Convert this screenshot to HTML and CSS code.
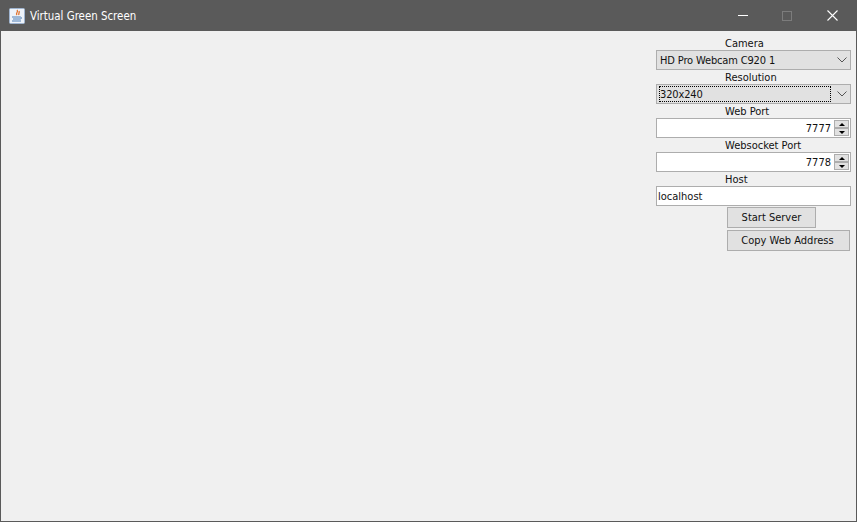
FILE: index.html
```html
<!DOCTYPE html>
<html lang="en">
<head>
<meta charset="utf-8">
<title>Virtual Green Screen</title>
<link rel="stylesheet" href="styles.css">
</head>
<body>
<div class="window">
  <header class="titlebar">
    <svg class="app-icon" width="16" height="16" viewBox="0 0 16 16">
      <rect x="0.5" y="0.5" width="15" height="15" rx="1" fill="#eef3fa" stroke="#9fb4d0"/>
      <path d="M8 2c2 2-2 3 0 5M10 3c1 1.500-1 2.500 0 4" fill="none" stroke="#e0702a" stroke-width="1.300"/>
      <path d="M3 9h8M4 11h7M3 13h9" stroke="#4f7fb5" stroke-width="1"/>
      <path d="M11 9c2 0 2 2 0 2" fill="none" stroke="#4f7fb5"/>
    </svg>
    <span class="title">Virtual Green Screen</span>
    <div class="controls">
      <div class="ctl"><svg width="10" height="11" viewBox="0 0 10 11"><path d="M0 5.500h10" stroke="#fff"/></svg></div>
      <div class="ctl"><svg width="10" height="10" viewBox="0 0 10 10"><rect x="0.500" y="0.500" width="9" height="9" fill="none" stroke="#7c7c7c"/></svg></div>
      <div class="ctl"><svg width="11" height="11" viewBox="0 0 11 11"><path d="M0.500 0.500l10 10M10.500 0.500l-10 10" stroke="#fff" stroke-width="1.100"/></svg></div>
    </div>
  </header>
  <main class="content">
    <aside class="panel">
      <div class="label">Camera</div>
      <div class="combo"><span class="combo-text">HD Pro Webcam C920 1</span><svg class="chev" width="10" height="6" viewBox="0 0 10 6"><path d="M0.500 0.500L5 5l4.500-4.500" fill="none" stroke="#555"/></svg></div>
      <div class="label">Resolution</div>
      <div class="combo"><span class="combo-text focused">320x240</span><svg class="chev" width="10" height="6" viewBox="0 0 10 6"><path d="M0.500 0.500L5 5l4.500-4.500" fill="none" stroke="#555"/></svg></div>
      <div class="label">Web Port</div>
      <div class="spinner"><span class="num">7777</span><div class="arrows"><div class="arrow"><i class="up"></i></div><div class="arrow"><i class="down"></i></div></div></div>
      <div class="label">Websocket Port</div>
      <div class="spinner"><span class="num">7778</span><div class="arrows"><div class="arrow"><i class="up"></i></div><div class="arrow"><i class="down"></i></div></div></div>
      <div class="label">Host</div>
      <div class="field">localhost</div>
      <div class="btn start">Start Server</div>
      <div class="btn copy">Copy Web Address</div>
    </aside>
  </main>
</div>
</body>
</html>
```
FILE: styles.css
```css
* { box-sizing: border-box; }
html, body { margin: 0; height: 100%; }
body { font-family: "DejaVu Sans", "Noto Sans", sans-serif; font-stretch: condensed; font-size: 11px; color: #111; overflow: hidden; }
.window { width: 857px; height: 522px; display: flex; flex-direction: column; background: #f0f0f0; border: 1px solid #5a5a5a; border-top: 0; }
.titlebar { height: 31px; margin: 0 -1px; flex: none; background: #5a5a5a; display: flex; align-items: center; padding-left: 9px; color: #fff; }
.app-icon { flex: none; }
.title { margin-left: 5px; font-size: 11.400px; line-height: 16px; padding-top: 1px; }
.controls { margin-left: auto; margin-right: 2px; display: flex; height: 100%; }
.ctl { width: 45px; display: flex; align-items: center; justify-content: center; }
.ctl:nth-child(2) { padding-right: 2px; }
.content { flex: 1; display: flex; justify-content: flex-end; padding-right: 5px; }
.panel { width: 195px; display: flex; flex-direction: column; align-items: stretch; padding-top: 5px; }
.label { height: 14px; line-height: 16px; padding-left: 69px; }
.combo { height: 20px; border: 1px solid #adadad; background: #e1e1e1; display: flex; align-items: center; padding: 0 3px 0 2px; justify-content: space-between; }
.combo-text { padding-left: 1px; letter-spacing: -0.150px; }
.combo-text.focused { flex: 1; height: 16px; line-height: 15px; border: 1px dotted #000; margin-right: 6px; padding-left: 0; }
.chev { flex: none; }
.spinner { height: 20px; border: 1px solid #adadad; background: #fff; display: flex; align-items: center; justify-content: flex-end; padding-right: 1px; }
.num { margin-right: 3px; }
.arrows { width: 15px; height: 16px; display: flex; flex-direction: column; gap: 0; }
.arrow { flex: 1; background: #e1e1e1; border: 1px solid #adadad; display: flex; align-items: center; justify-content: center; }
.arrow i { width: 0; height: 0; border-left: 3px solid transparent; border-right: 3px solid transparent; }
.up { border-bottom: 3px solid #000; }
.down { border-top: 3px solid #000; }
.field { height: 20px; line-height: 19px; border: 1px solid #adadad; background: #fff; padding-left: 1px; }
.btn { height: 21px; line-height: 19px; border: 1px solid #adadad; background: #e1e1e1; text-align: center; }
.start { width: 89px; margin: 1px 0 0 71px; }
.copy { width: 123px; margin: 2px 0 0 71px; padding-right: 2px; }
```
